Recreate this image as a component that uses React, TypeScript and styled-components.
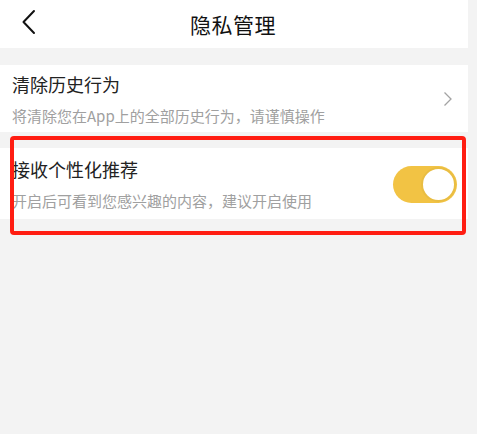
import styled, { createGlobalStyle } from "styled-components";

const GlobalStyle = createGlobalStyle`
  html, body {
    margin: 0;
    padding: 0;
    background: #f3f3f3;
    font-family: "Noto Sans CJK SC", "Noto Sans", sans-serif;
  }
`;

interface IRow {
  title: string;
  desc: string;
  height: number;
}

function BackIcon() {
  return (
    <svg width="16" height="26" viewBox="0 0 16 26">
      <path d="M13 2 L2.5 13 L13 24" fill="none" stroke="#111" strokeWidth="2" strokeLinecap="round" strokeLinejoin="round" />
    </svg>
  );
}

function Chevron() {
  return (
    <svg width="10" height="16" viewBox="0 0 10 16">
      <path d="M1.5 1.5 L8 8 L1.5 14.5" fill="none" stroke="#a3a3a3" strokeWidth="1.3" />
    </svg>
  );
}

export default function App() {
  const clearRow: IRow = {
    title: "清除历史行为",
    desc: "将清除您在App上的全部历史行为，请谨慎操作",
    height: 67,
  };
  const recRow: IRow = {
    title: "接收个性化推荐",
    desc: "开启后可看到您感兴趣的内容，建议开启使用",
    height: 71,
  };

  return (
    <>
      <GlobalStyle />
      <Page>
        <Header>
          <BackButton>
            <BackIcon />
          </BackButton>
          <Title>隐私管理</Title>
        </Header>

        <List>
          <Row $height={clearRow.height}>
            <Texts>
              <RowTitle>{clearRow.title}</RowTitle>
              <RowDesc>{clearRow.desc}</RowDesc>
            </Texts>
            <Chevron />
          </Row>
          <Row $height={recRow.height}>
            <Texts>
              <RowTitle>{recRow.title}</RowTitle>
              <RowDesc>{recRow.desc}</RowDesc>
            </Texts>
            <Toggle>
              <Knob />
            </Toggle>
          </Row>
        </List>

        <Highlight />
      </Page>
    </>
  );
}

const Page = styled.div`
  position: relative;
  width: 477px;
  height: 434px;
  background: #f3f3f3;
`;

const Header = styled.div`
  width: 468px;
  height: 48px;
  background: #fff;
  display: flex;
  align-items: center;
  justify-content: center;
  position: relative;
`;

const BackButton = styled.div`
  position: absolute;
  left: 21px;
  top: 9px;
  display: flex;
`;

const Title = styled.h1`
  margin: 0;
  font-size: 21px;
  font-weight: 400;
  color: #111;
  letter-spacing: 0.5px;
  margin-right: 2px;
`;

const List = styled.div`
  margin-top: 17px;
  display: flex;
  flex-direction: column;
  gap: 16px;
  width: 468px;
`;

const Row = styled.div<{ $height: number }>`
  height: ${(p) => p.$height}px;
  background: #fff;
  display: flex;
  align-items: center;
  justify-content: space-between;
  padding: 0 13px 0 12px;
  box-sizing: border-box;

  svg {
    margin-right: 2px;
  }
`;

const Texts = styled.div`
  display: flex;
  flex-direction: column;
  gap: 10px;
`;

const RowTitle = styled.div`
  font-size: 18px;
  line-height: 24px;
  color: #222;
`;

const RowDesc = styled.div`
  font-size: 15px;
  line-height: 20px;
  color: #a0a0a0;
`;

const Toggle = styled.div`
  width: 64px;
  height: 37px;
  border-radius: 19px;
  background: #f2c344;
  display: flex;
  align-items: center;
  justify-content: flex-end;
  margin-right: -2px;
  margin-top: 2px;
`;

const Knob = styled.div`
  width: 31px;
  height: 31px;
  border-radius: 50%;
  background: #fff;
  border: 2px solid #e9bd42;
  margin-right: 1px;
`;

const Highlight = styled.div`
  position: absolute;
  left: 10px;
  top: 136px;
  width: 448px;
  height: 91px;
  border: 4px solid #ff1d12;
  border-radius: 4px;
  pointer-events: none;
`;
